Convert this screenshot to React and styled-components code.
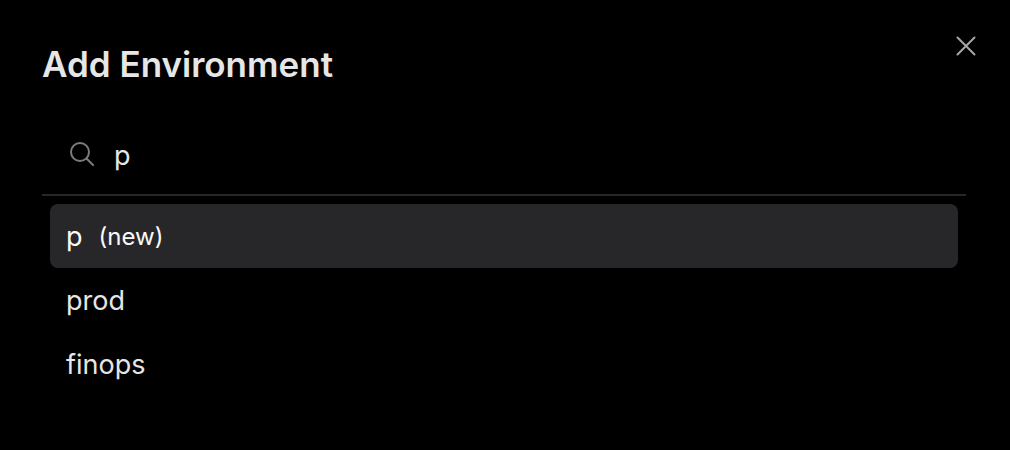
import React, { useState } from "react";
import styled, { createGlobalStyle } from "styled-components";

const GlobalStyle = createGlobalStyle`
  * {
    box-sizing: border-box;
  }

  body {
    margin: 0;
    background-color: #000;
    color: #e6e6e6;
    font-family: Inter, sans-serif;
  }
`;

const Dialog = styled.section`
  padding: 32px 44px 32px 42px;
`;

const Header = styled.header`
  display: flex;
  justify-content: space-between;
  align-items: flex-start;
  margin-right: -12px;
`;

const Title = styled.h2`
  margin: 8px 0 0;
  font-size: 35px;
  line-height: 48px;
  font-weight: 600;
`;

const CloseButton = styled.button`
  display: flex;
  padding: 2px 0;
  border: none;
  background: none;
  color: #a6a6a9;
  cursor: pointer;
`;

const SearchBar = styled.label`
  display: flex;
  align-items: center;
  gap: 20px;
  height: 80px;
  margin-top: 28px;
  padding: 0 28px;
  border-bottom: 2px solid #27272a;
`;

const SearchInput = styled.input`
  flex: 1;
  min-width: 0;
  padding: 2px 0 0;
  border: none;
  outline: none;
  background: transparent;
  color: inherit;
  font: inherit;
  font-size: 27px;
  line-height: 40px;
`;

const List = styled.ul`
  margin: 0;
  padding: 8px;
  list-style: none;
`;

const Option = styled.button`
  display: flex;
  align-items: center;
  gap: 16px;
  width: 100%;
  height: 64px;
  padding: 2px 16px 0;
  border: none;
  border-radius: 8px;
  background-color: ${({ $active }) => ($active ? "#27272a" : "transparent")};
  color: ${({ $active }) => ($active ? "#fafafa" : "inherit")};
  font: inherit;
  font-size: 27px;
  line-height: 40px;
  text-align: left;
  cursor: pointer;
`;

const Hint = styled.span`
  font-size: 24px;
`;

const environments = ["prod", "finops"];

function SearchIcon() {
  return (
    <svg width="24" height="26" viewBox="0 0 24 26" fill="none" stroke="#7c7c7e" strokeWidth="2" strokeLinecap="round" aria-hidden="true">
      <circle cx="10" cy="10" r="9" />
      <path d="M16.5 16.5 23 23" />
    </svg>
  );
}

function CloseIcon() {
  return (
    <svg width="24" height="24" viewBox="0 0 24 24" fill="none" stroke="currentColor" strokeWidth="2" strokeLinecap="round" aria-hidden="true">
      <path d="M3.5 3.5 20.5 20.5M20.5 3.5 3.5 20.5" />
    </svg>
  );
}

function App() {
  const [query, setQuery] = useState("p");
  const matches = environments.filter((name) => name.includes(query));

  return (
    <>
      <GlobalStyle />
      <Dialog role="dialog" aria-labelledby="dialog-title">
        <Header>
          <Title id="dialog-title">Add Environment</Title>
          <CloseButton type="button" aria-label="Close">
            <CloseIcon />
          </CloseButton>
        </Header>
        <SearchBar>
          <SearchIcon />
          <SearchInput
            aria-label="Search environments"
            value={query}
            onChange={(e) => setQuery(e.target.value)}
          />
        </SearchBar>
        <List>
          {query && (
            <li>
              <Option type="button" $active>
                {query} <Hint>(new)</Hint>
              </Option>
            </li>
          )}
          {matches.map((name) => (
            <li key={name}>
              <Option type="button">{name}</Option>
            </li>
          ))}
        </List>
      </Dialog>
    </>
  );
}

export default App;
